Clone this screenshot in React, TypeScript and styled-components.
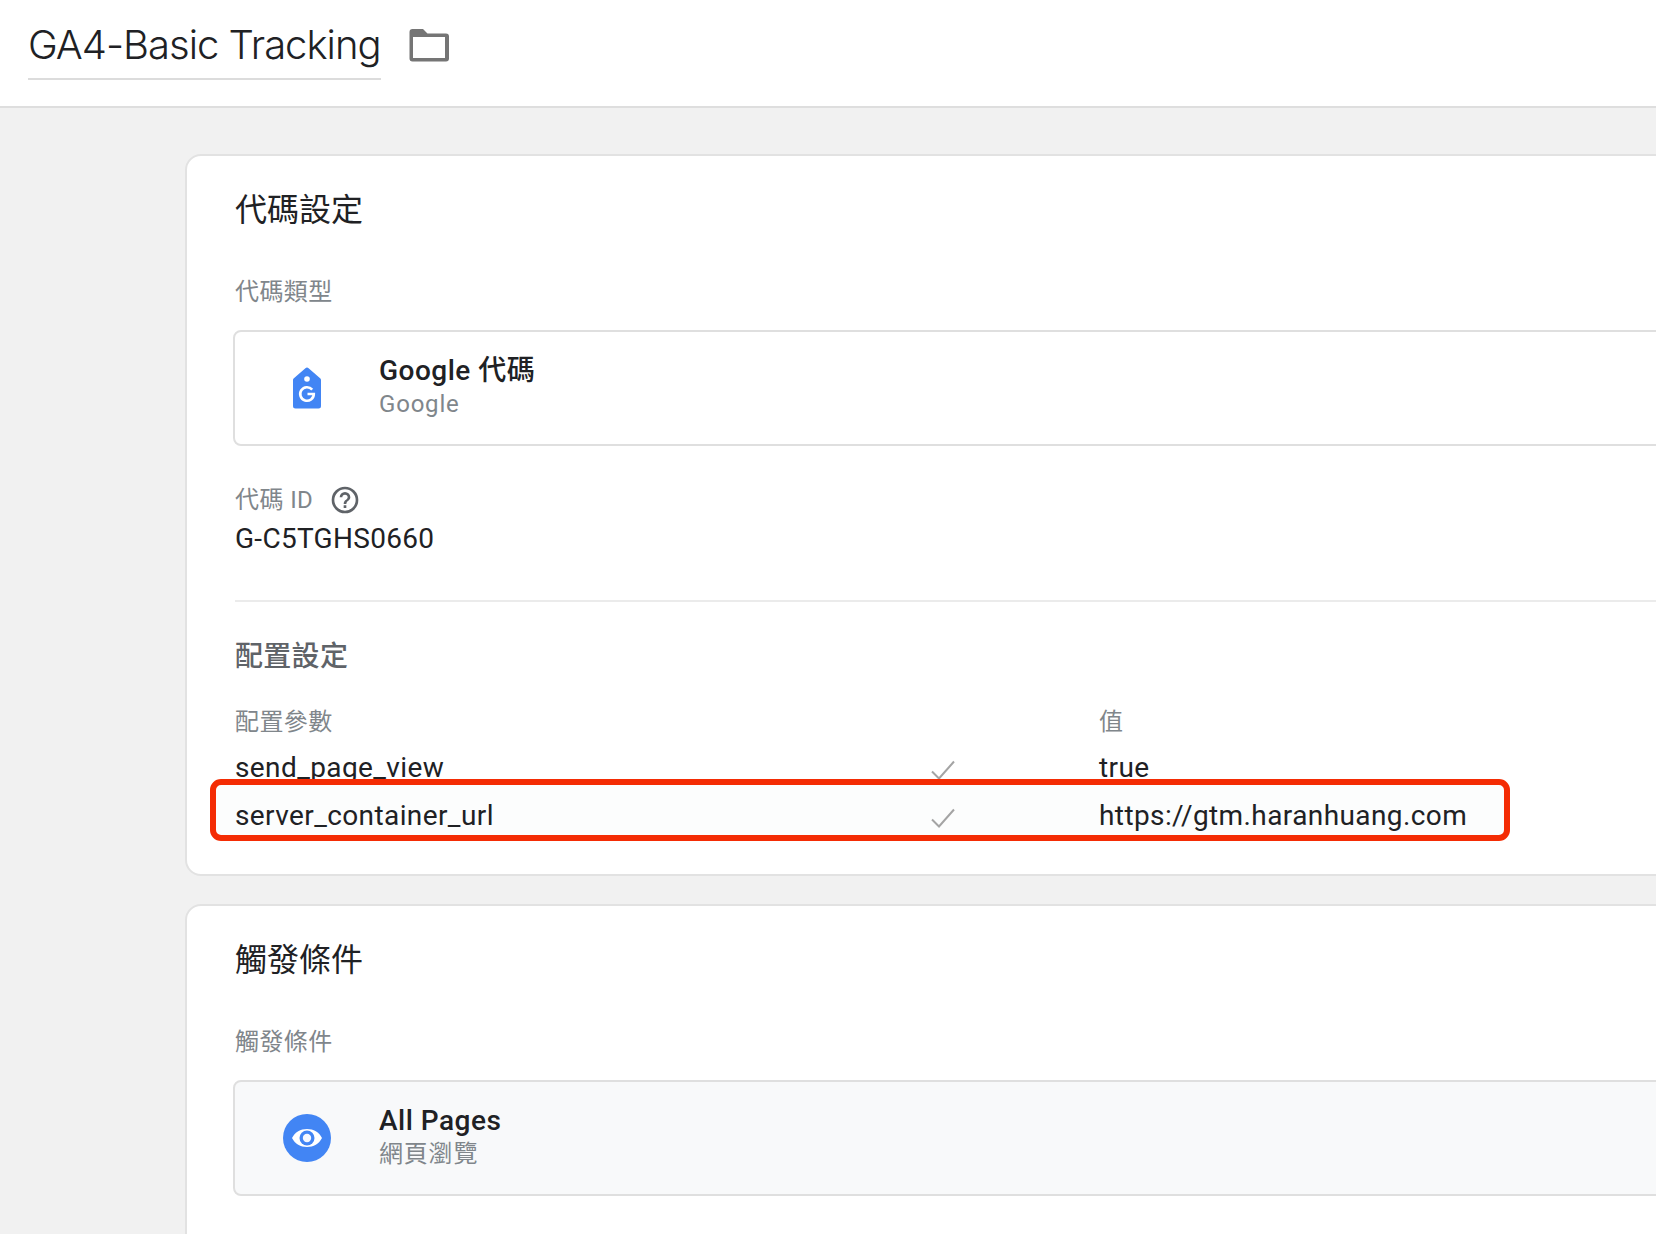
import styled, { createGlobalStyle } from "styled-components";

const GlobalStyle = createGlobalStyle`
  html, body {
    margin: 0;
    padding: 0;
    background: #f1f1f1;
  }
  body {
    font-family: Roboto, "Noto Sans CJK TC", sans-serif;
    color: #202124;
  }
`;

const Page = styled.div`
  width: 1656px;
  height: 1234px;
  overflow: hidden;
`;

const Header = styled.header`
  height: 108px;
  box-sizing: border-box;
  background: #fff;
  border-bottom: 2px solid #dedede;
  padding: 20px 0 0 28px;
  display: flex;
  align-items: flex-start;
  gap: 28px;
`;

const Title = styled.h1`
  margin: 0;
  height: 58px;
  line-height: 50px;
  font-family: Inter, Roboto, sans-serif;
  font-size: 40px;
  font-weight: 300;
  letter-spacing: -1px;
  color: #202124;
  border-bottom: 2px solid #dcdcdc;
  white-space: nowrap;
`;

const FolderIcon = styled.svg`
  width: 40px;
  height: 34px;
  margin-top: 8px;
`;

const Main = styled.main`
  padding: 46px 0 0 185px;
  display: flex;
  flex-direction: column;
  gap: 28px;
`;

const Card = styled.section`
  width: 1600px;
  box-sizing: border-box;
  background: #fff;
  border: 2px solid #e2e2e2;
  border-radius: 16px;
  padding: 31px 0 0 48px;
`;

const OpenCard = styled(Card)`
  padding-bottom: 120px;
`;

const CardTitle = styled.h2`
  margin: 0;
  font-size: 32px;
  line-height: 46px;
  font-weight: 400;
  color: #202124;
`;

const Label = styled.div`
  font-size: 24px;
  line-height: 30px;
  color: #80868b;
  letter-spacing: 0.4px;
`;

const FieldLabel = styled(Label)`
  margin-top: 44px;
`;

const EntityRow = styled.div<{ $muted?: boolean }>`
  margin: 23px 0 0 -2px;
  height: 116px;
  box-sizing: border-box;
  display: flex;
  align-items: center;
  border: 2px solid #dfdfdf;
  border-radius: 8px;
  background: ${(p) => (p.$muted ? "#f8f9fa" : "#fff")};
`;

const EntityIcon = styled.div`
  width: 144px;
  display: flex;
  justify-content: center;
  flex-shrink: 0;
`;

const EntityText = styled.div`
  display: flex;
  flex-direction: column;
  padding-bottom: 6px;
`;

const EntityName = styled.div`
  font-size: 28px;
  line-height: 37px;
  font-weight: 500;
  letter-spacing: 0.5px;
  color: #202124;
`;

const EntityType = styled.div`
  font-size: 24px;
  line-height: 30px;
  letter-spacing: 0.8px;
  color: #80868b;
`;

const IdLabel = styled(Label)`
  margin-top: 38px;
  display: flex;
  align-items: center;
  gap: 16px;
`;

const HelpIcon = styled.svg`
  width: 32px;
  height: 32px;
`;

const IdValue = styled.div`
  margin-top: 5px;
  font-size: 28px;
  line-height: 36px;
  letter-spacing: 0.3px;
  color: #202124;
`;

const Divider = styled.hr`
  margin: 43px 0 0;
  border: 0;
  height: 2px;
  background: #ebebeb;
`;

const SectionTitle = styled.h3`
  margin: 36px 0 0;
  font-size: 28px;
  line-height: 38px;
  font-weight: 500;
  letter-spacing: 0.3px;
  color: #5f6368;
`;

const Table = styled.div`
  position: relative;
  margin-top: 26px;
  padding-bottom: 38px;
`;

const TableRow = styled.div`
  display: grid;
  grid-template-columns: 696px 168px 1fr;
  align-items: center;
  height: 46px;
  font-size: 28px;
  letter-spacing: 0.4px;
  color: #202124;
`;

const TableHead = styled(TableRow)`
  height: 32px;
  margin-bottom: 10px;
  font-size: 24px;
  color: #80868b;
`;

const Check = styled.svg`
  width: 24px;
  height: 20px;
  margin-top: 6px;
`;

const Highlight = styled.div`
  position: absolute;
  left: -25px;
  top: 77px;
  width: 1300px;
  height: 62px;
  box-sizing: border-box;
  border: 6px solid #f42c04;
  border-radius: 11px;
  background: #fcfdfd;
  display: flex;
  align-items: center;
`;

const HighlightRow = styled(TableRow)`
  width: 100%;
  margin: 10px 0 0 19px;
`;

const ConfigRows = [{ name: "send_page_view", value: "true" }];

function TagIcon() {
  return (
    <svg width="30" height="42" viewBox="0 0 30 42">
      <path d="M13.4 1.3 1.6 11.5A2 2 0 0 0 1 13v26a2.5 2.5 0 0 0 2.5 2.5h23A2.5 2.5 0 0 0 29 39V13a2 2 0 0 0-.6-1.5L16.6 1.3a2.4 2.4 0 0 0-3.2 0Z" fill="#4285f4" />
      <circle cx="15" cy="12" r="2.8" fill="#fff" />
      <path d="M20.200 22.600A6.800 6.800 0 1 0 21.800 27H15.500" fill="none" stroke="#fff" strokeWidth="2.600" />
    </svg>
  );
}

function EyeIcon() {
  return (
    <svg width="48" height="48" viewBox="0 0 48 48">
      <circle cx="24" cy="24" r="24" fill="#4285f4" />
      <path d="M9 24c3-6 8.500-9 15-9s12 3 15 9c-3 6-8.500 9-15 9s-12-3-15-9Z" fill="#fff" />
      <circle cx="24" cy="24" r="7.500" fill="#4285f4" />
      <circle cx="24" cy="24" r="4.200" fill="#f5f8ff" />
    </svg>
  );
}

function CheckMark() {
  return (
    <Check viewBox="0 0 24 20">
      <path d="M1 11.500 8 18.500 23 1.500" fill="none" stroke="#a4a4a4" strokeWidth="2" />
    </Check>
  );
}

export default function App() {
  return (
    <Page>
      <GlobalStyle />
      <Header>
        <Title>GA4-Basic Tracking</Title>
        <FolderIcon viewBox="0 0 40 34">
          <path d="M3.500 1h10.500l4.500 4.500h18.500a3 3 0 0 1 3 3v22a3 3 0 0 1-3 3H3.500a3 3 0 0 1-3-3V4a3 3 0 0 1 3-3Z" fill="#757575" />
          <rect x="4" y="9" width="32" height="21" fill="#fff" />
        </FolderIcon>
      </Header>
      <Main>
        <Card>
          <CardTitle>代碼設定</CardTitle>
          <FieldLabel>代碼類型</FieldLabel>
          <EntityRow>
            <EntityIcon>
              <TagIcon />
            </EntityIcon>
            <EntityText>
              <EntityName>Google 代碼</EntityName>
              <EntityType>Google</EntityType>
            </EntityText>
          </EntityRow>
          <IdLabel>
            代碼 ID
            <HelpIcon viewBox="0 0 24 24">
              <path d="M11 18h2v-2h-2v2Zm1-16a10 10 0 1 0 0 20 10 10 0 0 0 0-20Zm0 18a8 8 0 1 1 0-16 8 8 0 0 1 0 16Zm0-14a4 4 0 0 0-4 4h2a2 2 0 1 1 4 0c0 2-3 1.750-3 5h2c0-2.250 3-2.500 3-5a4 4 0 0 0-4-4Z" fill="#5f6368" />
            </HelpIcon>
          </IdLabel>
          <IdValue>G-C5TGHS0660</IdValue>
          <Divider />
          <SectionTitle>配置設定</SectionTitle>
          <Table>
            <TableHead>
              <span>配置參數</span>
              <span />
              <span>值</span>
            </TableHead>
            {ConfigRows.map((row) => (
              <TableRow key={row.name}>
                <span>{row.name}</span>
                <CheckMark />
                <span>{row.value}</span>
              </TableRow>
            ))}
            <TableRow />
            <Highlight>
              <HighlightRow>
                <span>server_container_url</span>
                <CheckMark />
                <span>https://gtm.haranhuang.com</span>
              </HighlightRow>
            </Highlight>
          </Table>
        </Card>
        <OpenCard>
          <CardTitle>觸發條件</CardTitle>
          <FieldLabel>觸發條件</FieldLabel>
          <EntityRow $muted>
            <EntityIcon>
              <EyeIcon />
            </EntityIcon>
            <EntityText>
              <EntityName>All Pages</EntityName>
              <EntityType>網頁瀏覽</EntityType>
            </EntityText>
          </EntityRow>
        </OpenCard>
      </Main>
    </Page>
  );
}
